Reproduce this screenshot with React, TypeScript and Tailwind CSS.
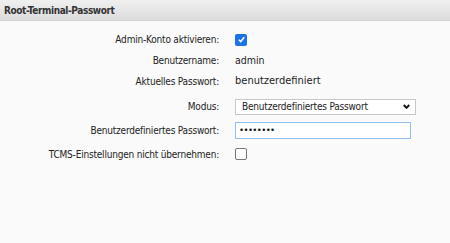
import React from "react";

const font = { fontFamily: '"DejaVu Sans Condensed", "DejaVu Sans", sans-serif' };

function Check({ checked }: { checked?: boolean }) {
    if (checked) {
        return (
            <span className="flex h-[12px] w-[12px] items-center justify-center rounded-[2px] bg-[#1a73e8]">
                <svg width="9" height="9" viewBox="0 0 10 10">
                    <path d="M2 5.3 L4.1 7.4 L8 2.6" fill="none" stroke="#fff" strokeWidth="1.8" />
                </svg>
            </span>
        );
    }
    return <span className="block h-[12px] w-[12px] rounded-[2px] border border-[#767676] bg-white"></span>;
}

function Row({ label, h, children }: { label: string; h: string; children: React.ReactNode }) {
    return (
        <div className={"flex items-center " + h}>
            <div className="w-[219px] text-right text-[10px] tracking-[-0.2px]">{label}</div>
            <div className="ml-[16px] flex items-center text-[11px]">{children}</div>
        </div>
    );
}

export default function App() {
    return (
        <div className="h-[243px] w-[450px] bg-[#fafafa] text-[#222]" style={font}>
            {/* header */}
            <div className="flex h-[21px] items-center border-b border-[#d4d4d4] bg-gradient-to-b from-[#f0f0f0] to-[#dcdcdc] pl-[4px] text-[10px] font-bold tracking-[-0.4px] text-[#333]">
                Root-Terminal-Passwort
            </div>

            <div className="pt-[8px]">
                <Row label="Admin-Konto aktivieren:" h="h-[21px]">
                    <Check checked />
                </Row>
                <Row label="Benutzername:" h="h-[21px]">
                    <span className="text-[10.5px]">admin</span>
                </Row>
                <Row label="Aktuelles Passwort:" h="h-[21px]">
                    <span>benutzerdefiniert</span>
                </Row>
                <Row label="Modus:" h="h-[29px]">
                    <div className="flex h-[16px] w-[181px] items-center justify-between border border-[#c8c8c8] bg-white pl-[6px] pr-[5px] text-[10px] tracking-[-0.2px]">
                        <span>Benutzerdefiniertes Passwort</span>
                        <svg width="7" height="5" viewBox="0 0 7 5">
                            <path d="M0.8 1 L3.5 3.8 L6.2 1" fill="none" stroke="#111" strokeWidth="1.9" />
                        </svg>
                    </div>
                </Row>
                <Row label="Benutzerdefiniertes Passwort:" h="h-[18px]">
                    <div className="flex h-[17px] w-[176px] items-center border border-[#93c1ef] bg-white pl-[3px] text-[9.5px] tracking-[-0.6px] text-[#111]">
                        ••••••••
                    </div>
                </Row>
                <Row label="TCMS-Einstellungen nicht übernehmen:" h="h-[30px]">
                    <Check />
                </Row>
            </div>
        </div>
    );
}
